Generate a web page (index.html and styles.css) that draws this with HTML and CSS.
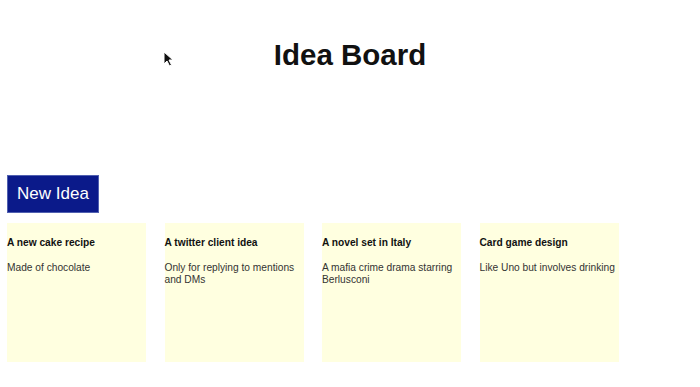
FILE: index.html
```html
<!DOCTYPE html>
<html>
<head>
<meta charset="utf-8">
<link rel="stylesheet" href="styles.css">
</head>
<body>
<div class="page">
  <header class="header">
    <h1 class="title">Idea Board</h1>
  </header>
  <button class="new-idea">New Idea</button>
  <div class="board">
    <div class="card">
      <div class="card-title">A new cake recipe</div>
      <div class="card-body">Made of chocolate</div>
    </div>
    <div class="card">
      <div class="card-title">A twitter client idea</div>
      <div class="card-body">Only for replying to mentions and DMs</div>
    </div>
    <div class="card">
      <div class="card-title">A novel set in Italy</div>
      <div class="card-body">A mafia crime drama starring Berlusconi</div>
    </div>
    <div class="card">
      <div class="card-title">Card game design</div>
      <div class="card-body">Like Uno but involves drinking</div>
    </div>
  </div>
</div>
<svg class="cursor" width="12" height="17" viewBox="0 0 12 17"><path d="M1 1 L1 13 L4 10 L6.5 15 L8.5 14 L6 9 L10 9 Z" fill="#111" stroke="#fff" stroke-width="1"/></svg>
</body>
</html>
```
FILE: styles.css
```css
html, body {
  margin: 0;
  padding: 0;
  background: #ffffff;
}
body {
  font-family: "Liberation Sans", Arial, Helvetica, sans-serif;
  color: #111;
  position: relative;
  width: 700px;
  height: 387px;
  overflow: hidden;
}
.page {
  padding: 0 7px;
}
.header {
  height: 175px;
  display: flex;
  justify-content: center;
  align-items: flex-start;
}
.title {
  margin: 38px 0 0 0;
  font-size: 29.5px;
  line-height: 34px;
  font-weight: bold;
  color: #111;
}
.new-idea {
  display: block;
  margin: 0;
  width: 92px;
  height: 38px;
  padding: 0;
  background: #0b1a8a;
  border: 1px solid #5060b0;
  color: #fff;
  font-family: "Liberation Sans", Arial, Helvetica, sans-serif;
  font-size: 17px;
  line-height: 20px;
}
.board {
  display: flex;
  gap: 18.5px;
  margin-top: 10px;
}
.card {
  width: 139px;
  height: 139px;
  background: #ffffe0;
  padding-top: 13px;
  box-sizing: border-box;
}
.card-title {
  font-size: 10.2px;
  line-height: 13px;
  font-weight: bold;
  color: #111;
}
.card-body {
  margin-top: 13px;
  font-size: 10.2px;
  line-height: 12px;
  color: #333;
}
.cursor {
  position: absolute;
  left: 163px;
  top: 51px;
}
```
